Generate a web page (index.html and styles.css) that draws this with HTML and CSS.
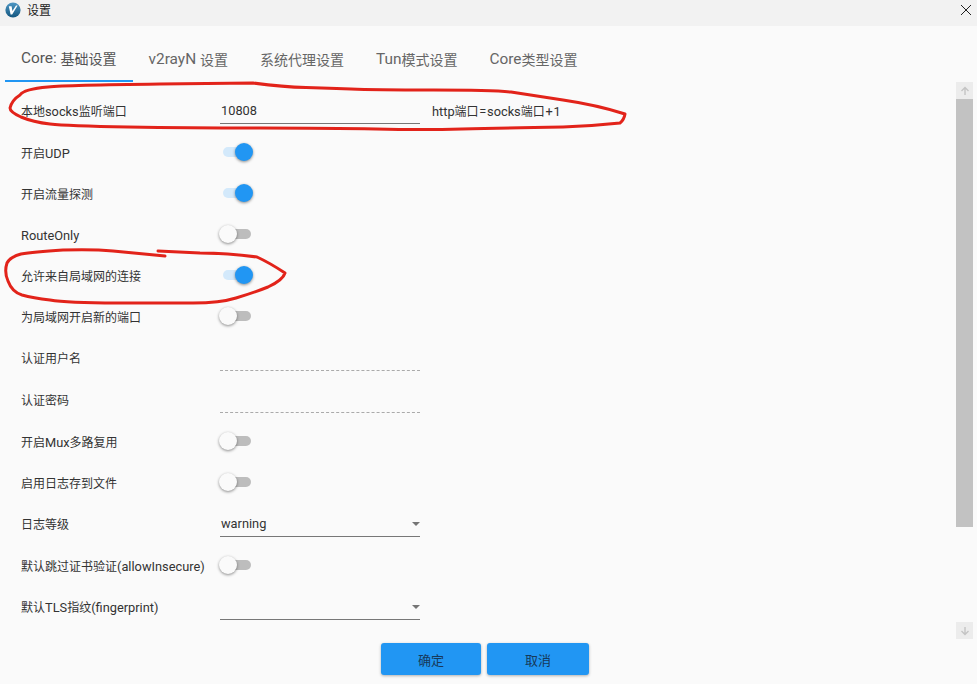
FILE: index.html
```html
<!DOCTYPE html>
<html lang="zh-CN">
<head>
<meta charset="utf-8">
<title>设置</title>
<link rel="stylesheet" href="styles.css">
</head>
<body>
<div class="window">
  <header class="titlebar">
    <svg class="logo" viewBox="0 0 16 16" aria-hidden="true">
      <defs><linearGradient id="lg" x1="0" y1="0" x2="0" y2="1"><stop offset="0" stop-color="#4f97c4"/><stop offset="1" stop-color="#13567f"/></linearGradient></defs>
      <circle cx="8" cy="8" r="7.6" fill="url(#lg)"/>
      <path d="M3.8 4.2 L6.6 4.2 L7.4 9 L11 3.4 L12.6 3.4 L7.2 12.4 L5.6 12.4 Z" fill="#fff"/>
    </svg>
    <span class="title">设置</span>
    <svg class="close" viewBox="0 0 10 10" aria-hidden="true"><path d="M0 0 L10 10 M10 0 L0 10" stroke="#222" stroke-width="1" fill="none"/></svg>
  </header>

  <nav class="tabs">
    <div class="tab active"><span class="en">Core: </span>基础设置</div>
    <div class="tab"><span class="en">v2rayN </span>设置</div>
    <div class="tab">系统代理设置</div>
    <div class="tab"><span class="en">Tun</span>模式设置</div>
    <div class="tab"><span class="en">Core</span>类型设置</div>
  </nav>

  <main class="content">
    <div class="form">
      <div class="row field-row">
        <label class="label">本地<span class="en">socks</span>监听端口</label>
        <div class="field"><span class="en">10808</span></div>
        <span class="help"><span class="en">http</span>端口<span class="en sym">=</span><span class="en">socks</span>端口<span class="en sym">+</span><span class="en">1</span></span>
      </div>
      <div class="row"><label class="label">开启<span class="en">UDP</span></label><span class="toggle on"></span></div>
      <div class="row"><label class="label">开启流量探测</label><span class="toggle on"></span></div>
      <div class="row"><label class="label"><span class="en">RouteOnly</span></label><span class="toggle"></span></div>
      <div class="row"><label class="label">允许来自局域网的连接</label><span class="toggle on"></span></div>
      <div class="row"><label class="label">为局域网开启新的端口</label><span class="toggle"></span></div>
      <div class="row field-row"><label class="label">认证用户名</label><div class="field disabled"></div></div>
      <div class="row field-row"><label class="label">认证密码</label><div class="field disabled"></div></div>
      <div class="row"><label class="label">开启<span class="en">Mux</span>多路复用</label><span class="toggle"></span></div>
      <div class="row"><label class="label">启用日志存到文件</label><span class="toggle"></span></div>
      <div class="row field-row"><label class="label">日志等级</label><div class="field select"><span class="en">warning</span></div></div>
      <div class="row"><label class="label">默认跳过证书验证<span class="en">(allowInsecure)</span></label><span class="toggle"></span></div>
      <div class="row field-row"><label class="label">默认<span class="en">TLS</span>指纹<span class="en">(fingerprint)</span></label><div class="field select"></div></div>
    </div>
    <div class="scrollbar">
      <div class="sb-btn"><svg viewBox="0 0 10 10" aria-hidden="true"><path d="M5 9 V2 M1.5 5 L5 1.5 L8.5 5" stroke="#c4c4c4" stroke-width="1.4" fill="none"/></svg></div>
      <div class="sb-thumb"></div>
      <div class="sb-track"></div>
      <div class="sb-btn"><svg viewBox="0 0 10 10" aria-hidden="true"><path d="M5 1 V8 M1.5 5 L5 8.5 L8.5 5" stroke="#c4c4c4" stroke-width="1.4" fill="none"/></svg></div>
    </div>
  </main>

  <footer class="footer">
    <button class="btn ok">确定</button>
    <button class="btn cancel">取消</button>
  </footer>

  <svg class="annotation" viewBox="0 0 977 684" aria-hidden="true">
    <path d="M253 83 Q283 87 306 87.5 Q330 88 351 89 Q373 90 433 90 Q493 90 511 92 Q530 95 563 100 Q597 105 625 114 Q624 120 620 123 Q592 126 563 127 Q500 128 462 129 Q423 130 376 129 Q330 128 260 128 Q190 128 128 127 Q67 126 50 124 Q33 122 21 117 Q10 112 10 108 Q12 100 20 95 Q24 89 48 87 Q67 85 160 84 Z"/>
    <path d="M165 256 Q133 253 113 251 Q93 249 63 250 Q33 252 21 254 Q10 257 7 263 Q4 272 8 281 Q12 292 22 295 Q33 298 50 300 Q67 303 117 303 Q167 303 193 303 Q220 303 236 298 Q253 293 268 287 Q283 280 285 273 Q270 263 257 257 Q228 253 200 253 Q180 252 158 251"/>
  </svg>
</div>
</body>
</html>
```

FILE: styles.css
```css
* { box-sizing: border-box; }
html, body { margin: 0; padding: 0; }
body {
  background: #fafafa;
  color: #333;
  font-family: "Noto Sans CJK SC", "Noto Sans", sans-serif;
  font-size: 12px;
}
.en { font-family: Roboto, "Noto Sans CJK SC", sans-serif; font-size: 12.8px; }
.sym { margin: 0 .7px; }

.window {
  position: relative;
  display: flex;
  flex-direction: column;
  width: 977px;
  height: 684px;
  overflow: hidden;
}

.titlebar {
  display: flex;
  align-items: center;
  flex: 0 0 26px;
  height: 26px;
  padding: 0 6px 6px 5px;
  background: #f2f2f2;
}
.logo { width: 16px; height: 16px; }
.title { margin-left: 6px; color: #222; line-height: 16px; }
.close { width: 10px; height: 10px; margin-left: auto; }

.tabs {
  display: flex;
  flex: 0 0 56px;
  height: 56px;
  padding-left: 5px;
}
.tab {
  display: flex;
  align-items: center;
  height: 56px;
  padding: 10px 16px 0;
  font-size: 14px;
  color: #666;
  white-space: pre;
}
.tab .en { font-size: 15.4px; }
.tab.active { border-bottom: 2px solid #2196f3; color: #555; }

.content {
  display: flex;
  flex: 1 1 auto;
  min-height: 0;
  padding-right: 4px;
}
.form {
  flex: 1 1 auto;
  padding: 7.5px 0 0 21px;
}
.row {
  display: flex;
  align-items: center;
  height: 41px;
}
.field-row { height: 42px; }
.label { flex: 0 0 199px; white-space: nowrap; color: #333; }

.field {
  position: relative;
  width: 200px;
  height: 25px;
  margin-top: 2px;
  padding-left: 1px;
  line-height: 22px;
  border-bottom: 1px solid #777;
  color: #333;
}
.field.disabled { border-bottom: 1px dashed #aaa; margin-top: 1px; }
.select::after {
  content: "";
  position: absolute;
  right: 0;
  top: 10px;
  border-left: 4px solid transparent;
  border-right: 4px solid transparent;
  border-top: 4px solid #757575;
}
.help { margin-left: 12px; color: #333; }

.toggle {
  position: relative;
  display: block;
  width: 28px;
  height: 10px;
  margin-left: 3px;
  border-radius: 5px;
  background: #bdbdbd;
}
.toggle::after {
  content: "";
  position: absolute;
  left: -4px;
  top: -4px;
  width: 18px;
  height: 18px;
  border-radius: 50%;
  background: #fafafa;
  box-shadow: 0 1px 3px rgba(0, 0, 0, .45);
}
.toggle.on { background: #d3e9fb; }
.toggle.on::after {
  left: 12px;
  background: #2196f3;
}

.scrollbar {
  display: flex;
  flex-direction: column;
  flex: 0 0 17px;
  height: 557px;
}
.sb-btn {
  display: flex;
  align-items: center;
  justify-content: center;
  flex: 0 0 17px;
  background: #ececec;
}
.sb-btn svg { width: 10px; height: 10px; }
.sb-thumb { flex: 0 0 428px; background: #c2c2c2; }
.sb-track { flex: 1 1 auto; }

.footer {
  display: flex;
  flex: 0 0 45px;
  gap: 6px;
  padding: 4px 0 0 381px;
}
.btn {
  height: 32px;
  border: 0;
  border-radius: 3px;
  background: #2196f3;
  color: #17395a;
  font: 13px "Noto Sans CJK SC", sans-serif;
  box-shadow: 0 1px 3px rgba(0, 0, 0, .3);
}
.ok { width: 100px; }
.cancel { width: 102px; }

.annotation {
  position: absolute;
  left: 0;
  top: 0;
  width: 977px;
  height: 684px;
  pointer-events: none;
}
.annotation path { fill: none; stroke: #e2231a; stroke-width: 3; stroke-linejoin: round; stroke-linecap: round; }
```
